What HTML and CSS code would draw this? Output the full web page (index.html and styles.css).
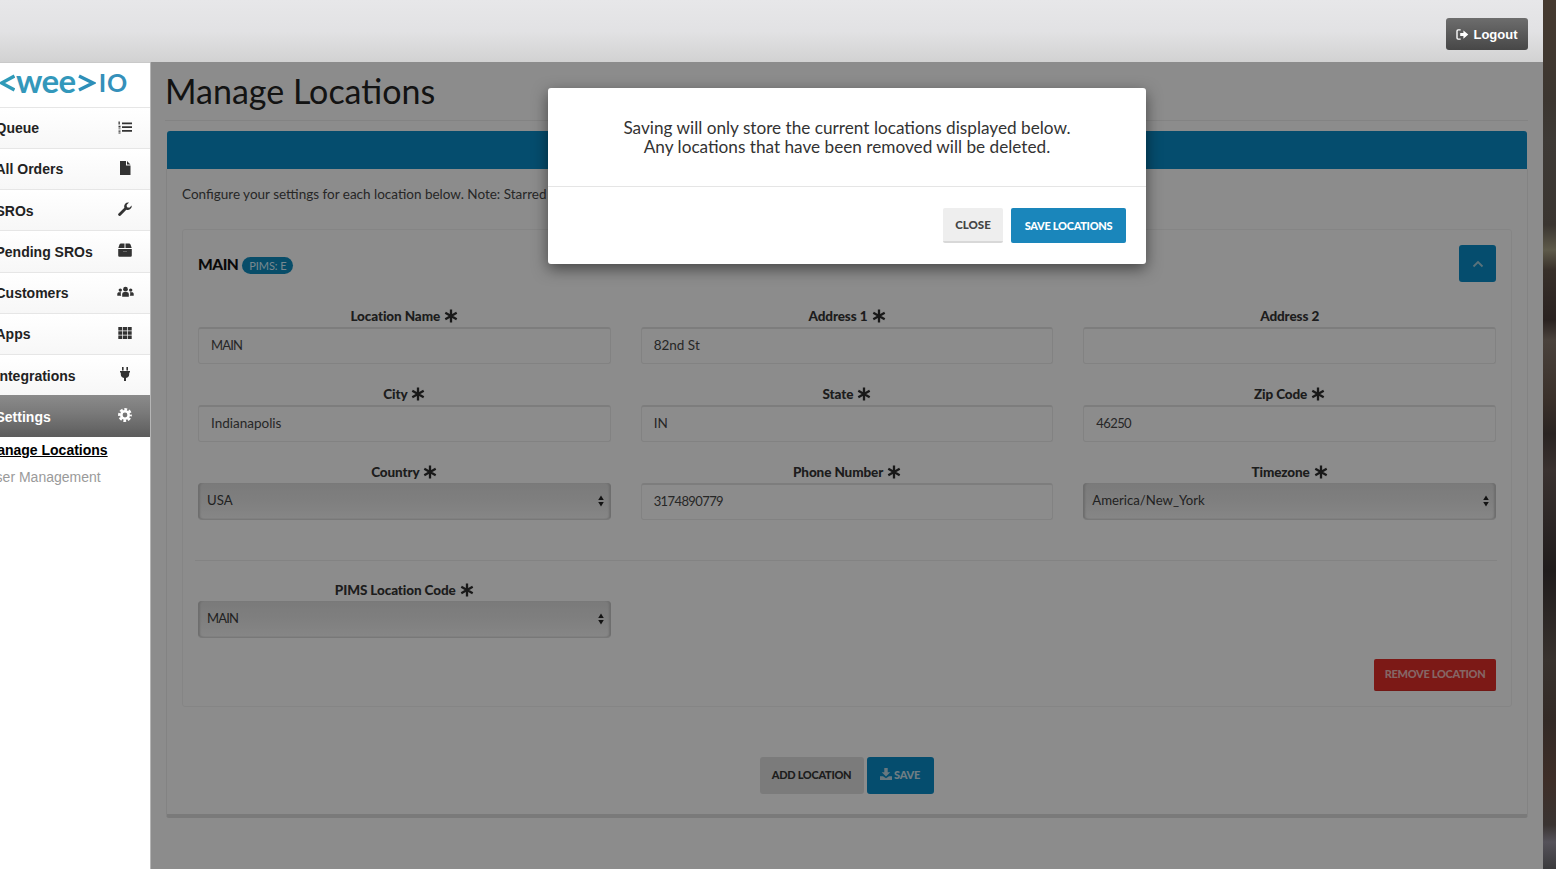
FILE: index.html
```html
<!DOCTYPE html>
<html lang="en">
<head>
<meta charset="utf-8">
<title>Manage Locations</title>
<link rel="stylesheet" href="styles.css">
</head>
<body>
<div class="app">
  <header class="topbar">
    <button class="logout">
      <svg class="ic-logout" viewBox="0 0 14 12"><path d="M5 1H2.200C1.500 1 1 1.500 1 2.200v7.600C1 10.500 1.500 11 2.200 11H5" fill="none" stroke="#fff" stroke-width="1.500"/><path d="M4.500 4.300H8V1.500L13.300 6 8 10.500V7.700H4.500z" fill="#fff"/></svg>
      Logout
    </button>
  </header>
  <div class="shell">
    <aside class="sidebar">
      <div class="logo">
        <svg class="chev chev-l" viewBox="0 0 16 18"><polyline points="15.500,2 2.500,9 15.500,16" fill="none" stroke="#2f9ab8" stroke-width="3.400"/></svg>
        <span class="logo-wee">wee</span>
        <svg class="chev chev-r" viewBox="0 0 18 18"><polyline points="1,2 15,9 1,16" fill="none" stroke="#2d8fb9" stroke-width="3.400"/></svg>
        <span class="logo-io">IO</span>
      </div>
      <nav>
        <a class="nav-item"><span>Queue</span>
          <svg class="nav-ic" viewBox="0 0 14 14"><path d="M4 2.500h10v1.700H4zM4 6.200h10v1.700H4zM4 10h10v1.700H4z" fill="#333"/><path d="M.5 1.500h1.300v3H.5zM.5 5.800h2v1.100H.5zM.5 7.600h2v1H.5zM.5 9.700h2v.9H.5zM.5 11.200h2v.8H.5zM.5 12.600h2v.9H.5z" fill="#333"/></svg></a>
        <a class="nav-item"><span>All Orders</span>
          <svg class="nav-ic" viewBox="0 0 14 14"><path d="M2 0h6v4.500h4.500v9.500H2zM9 0l3.500 3.500H9z" fill="#333"/></svg></a>
        <a class="nav-item"><span>SROs</span>
          <svg class="nav-ic" viewBox="0 0 14 14"><path d="M.6 11.400 6.400 5.800A4 4 0 0 1 11 .6L8.600 3l.4 2.300 2.300.5L13.700 3.400A4 4 0 0 1 8.300 7.700L2.700 13.500A1.400 1.400 0 0 1 .6 11.400z" fill="#333"/></svg></a>
        <a class="nav-item"><span>Pending SROs</span>
          <svg class="nav-ic" viewBox="0 0 14 14"><path d="M3 .5h3.500v4.500H.3L1.500 1.500A1.600 1.600 0 0 1 3 .5zM7.500 .5H11a1.600 1.600 0 0 1 1.500 1l1.200 3.500H7.500zM.2 6h13.600v6.500a1.200 1.200 0 0 1-1.200 1.200H1.400A1.200 1.200 0 0 1 .2 12.500z" fill="#333"/><path d="M5 8.500h4" stroke="#666" stroke-width="1"/></svg></a>
        <a class="nav-item"><span>Customers</span>
          <svg class="nav-ic ic-wide" viewBox="0 0 18 14"><g fill="#333"><circle cx="9" cy="4" r="2.500"/><path d="M5.500 12V9.300C5.500 7.900 6.500 7 7.800 7h2.400c1.300 0 2.300.9 2.300 2.300V12z"/><circle cx="3.500" cy="5" r="1.800"/><path d="M.3 11V9.200C.3 8 1.200 7.300 2.200 7.300h2.200A3.500 3.500 0 0 0 4.500 11z"/><circle cx="14.500" cy="5" r="1.800"/><path d="M17.700 11V9.200c0-1.200-.9-1.900-1.900-1.900h-2.200a3.500 3.500 0 0 1-.1 3.700z"/></g></svg></a>
        <a class="nav-item"><span>Apps</span>
          <svg class="nav-ic" viewBox="0 0 14 14"><path d="M.3 1h4v3.400h-4zM5 1h4v3.400H5zM9.700 1h4v3.400h-4zM.3 5.300h4v3.400h-4zM5 5.300h4v3.400H5zM9.700 5.300h4v3.400h-4zM.3 9.600h4V13h-4zM5 9.600h4V13H5zM9.700 9.600h4V13h-4z" fill="#333"/></svg></a>
        <a class="nav-item"><span>Integrations</span>
          <svg class="nav-ic" viewBox="0 0 14 14"><path d="M4 0h1.600v3.500H4zM8.400 0H10v3.500H8.400zM2 4h10v1.500h-.8v1.700A4 4 0 0 1 8 11v3H6v-3a4 4 0 0 1-3.200-3.800V5.500H2z" fill="#333"/></svg></a>
        <a class="nav-item nav-active"><span>Settings</span>
          <svg class="nav-ic" viewBox="0 0 14 14"><circle cx="7" cy="7" r="3.700" fill="none" stroke="#fff" stroke-width="2.600"/><circle cx="7" cy="7" r="5.700" fill="none" stroke="#fff" stroke-width="2.400" stroke-dasharray="2.800 1.680" stroke-dashoffset="1.400"/></svg></a>
      </nav>
      <ul class="subnav">
        <li class="sub-active">Manage Locations</li>
        <li>User Management</li>
      </ul>
    </aside>
    <main class="main">
      <h1 class="page-title">Manage Locations</h1>
      <section class="card">
        <div class="card-bar"></div>
        <div class="card-body">
          <p class="intro">Configure your settings for each location below. Note: Starred (*) fields are required.</p>
          <div class="location">
            <div class="loc-head">
              <div class="loc-name"><strong>MAIN</strong><span class="badge">PIMS: E</span></div>
              <button class="collapse"><svg viewBox="0 0 12 8"><polyline points="1.500,6.500 6,2 10.500,6.500" fill="none" stroke="#9cc4d4" stroke-width="1.800"/></svg></button>
            </div>
            <div class="form-grid">
              <div class="field"><label>Location Name <svg class="star" viewBox="0 0 14 14"><use href="#asterisk"/></svg></label><input class="caps" type="text" value="MAIN"></div>
              <div class="field"><label>Address 1 <svg class="star" viewBox="0 0 14 14"><use href="#asterisk"/></svg></label><input type="text" value="82nd St"></div>
              <div class="field"><label>Address 2</label><input type="text" value=""></div>
              <div class="field"><label>City <svg class="star" viewBox="0 0 14 14"><use href="#asterisk"/></svg></label><input type="text" value="Indianapolis"></div>
              <div class="field"><label>State <svg class="star" viewBox="0 0 14 14"><use href="#asterisk"/></svg></label><input type="text" value="IN"></div>
              <div class="field"><label>Zip Code <svg class="star" viewBox="0 0 14 14"><use href="#asterisk"/></svg></label><input class="num" type="text" value="46250"></div>
              <div class="field"><label>Country <svg class="star" viewBox="0 0 14 14"><use href="#asterisk"/></svg></label>
                <div class="select"><span>USA</span><svg class="updown" viewBox="0 0 6 12"><path d="M3 .5 5.800 5H.2zM3 11.500.2 7h5.600z" fill="#222"/></svg></div></div>
              <div class="field"><label>Phone Number <svg class="star" viewBox="0 0 14 14"><use href="#asterisk"/></svg></label><input class="num" type="text" value="3174890779"></div>
              <div class="field"><label>Timezone <svg class="star" viewBox="0 0 14 14"><use href="#asterisk"/></svg></label>
                <div class="select"><span>America/New_York</span><svg class="updown" viewBox="0 0 6 12"><path d="M3 .5 5.800 5H.2zM3 11.500.2 7h5.600z" fill="#222"/></svg></div></div>
            </div>
            <hr class="rule">
            <div class="form-grid">
              <div class="field"><label>PIMS Location Code <svg class="star" viewBox="0 0 14 14"><use href="#asterisk"/></svg></label>
                <div class="select"><span class="caps">MAIN</span><svg class="updown" viewBox="0 0 6 12"><path d="M3 .5 5.800 5H.2zM3 11.500.2 7h5.600z" fill="#222"/></svg></div></div>
            </div>
            <div class="loc-actions"><button class="btn btn-danger">REMOVE LOCATION</button></div>
          </div>
          <div class="card-actions">
            <button class="btn btn-grey">ADD LOCATION</button>
            <button class="btn btn-blue"><svg class="ic-dl" viewBox="0 0 14 14"><path d="M5 0h4v5h3L7 10 2 5h3z" fill="#b5cfdb"/><path d="M0 9.500h3.500L7 12l3.500-2.500H14V14H0z" fill="#b5cfdb"/></svg>SAVE</button>
          </div>
        </div>
      </section>
      <div class="backdrop">
        <div class="modal">
          <div class="modal-body">Saving will only store the current locations displayed below.<br>Any locations that have been removed will be deleted.</div>
          <div class="modal-foot">
            <button class="mbtn mbtn-close">CLOSE</button>
            <button class="mbtn mbtn-save">SAVE LOCATIONS</button>
          </div>
        </div>
      </div>
    </main>
  </div>
</div>
<svg class="defs" width="0" height="0"><defs><g id="asterisk"><path d="M7 .5v13M1.300 3.700l11.400 6.600M12.700 3.700 1.300 10.300" fill="none" stroke="#2b2b2b" stroke-width="2.300"/></g></defs></svg>
</body>
</html>
```

FILE: styles.css
```css
* { box-sizing: border-box; }
html, body { margin: 0; height: 100%; overflow: hidden; }
body {
  width: 1556px;
  height: 869px;
  font-family: "Lato", "Liberation Sans", sans-serif;
  color: #333;
  background: linear-gradient(180deg, #463a30 0, #3c3630 100px, #3e3a36 140px, #3a3530 225px, #5e5a4a 250px, #38302a 270px, #2a2220 320px, #4a423c 340px, #3a302a 400px, #2a2422 434px, #3a3230 470px, #201c1c 570px, #38322e 660px, #332a26 720px, #3e2e28 780px, #3a3432 825px, #55525a 842px, #3a3a3c 869px);
}
button { font-family: inherit; cursor: pointer; }
.defs { position: absolute; }

.app { width: 1543px; height: 869px; display: flex; flex-direction: column; background: #fff; }

.topbar {
  height: 62px;
  flex: none;
  display: flex;
  justify-content: flex-end;
  align-items: flex-start;
  padding: 18px 15px 0 0;
  background: linear-gradient(180deg, #e7e7e9 0, #e2e2e4 50%, #d2d2d2 100%);
}
.logout {
  width: 82px;
  height: 32px;
  display: flex;
  align-items: center;
  justify-content: center;
  gap: 4px;
  padding: 0;
  border: 0;
  border-radius: 3px;
  color: #fff;
  font: bold 13px "Liberation Sans", sans-serif;
  background: linear-gradient(180deg, #6d6d6d 0, #474747 100%);
}
.ic-logout { width: 13px; height: 11px; }

.shell { flex: 1; display: flex; min-height: 0; }

.sidebar {
  width: 150px;
  flex: none;
  background: #fff;
  overflow: hidden;
  font-family: "Liberation Sans", sans-serif;
  font-size: 14px;
}
.logo {
  height: 44.500px;
  display: flex;
  align-items: center;
  padding-bottom: 2px;
  border-top: 1px solid #c9c9c9;
  white-space: nowrap;
}
.logo-wee { font: 700 33px/1 "Lato", sans-serif; margin: -7px 0 0 1px; letter-spacing: -.6px; color: #3398bb; }
.logo-io { font: 700 25px/1 "Lato", sans-serif; margin: -2px 0 0 3px; color: #3590ba; letter-spacing: 1px; }
.chev { height: 18px; flex: none; margin-top: -2px; }
.chev-l { width: 16px; margin-left: -1px; }
.chev-r { width: 18px; margin-left: 2px; }

.nav-item {
  height: 41.250px;
  display: flex;
  align-items: center;
  justify-content: space-between;
  padding-right: 18px;
  border-top: 1px solid #e6e6e6;
  background: linear-gradient(180deg, #fff 0, #f7f7f7 100%);
  color: #222;
  font-weight: bold;
}
.nav-item span { margin: 1px 0 0 -4.500px; }
.nav-ic { width: 14px; height: 14px; margin-top: -2px; }
.ic-wide { width: 17px; margin-right: -2px; }
.nav-active {
  border-top: 1px solid #8a8a8a;
  color: #fff;
  background: linear-gradient(180deg, #8a8a8a 0, #7a7a7a 40%, #5c5c5c 100%);
}

.subnav { list-style: none; margin: 0; padding: 0; }
.subnav li { height: 27px; line-height: 27px; margin-left: -14.500px; color: #9a9a9a; white-space: nowrap; }
.subnav .sub-active { color: #000; font-weight: bold; text-decoration: underline; }

.main {
  position: relative;
  flex: 1;
  min-width: 0;
  padding: 0 15px;
  background: #f1f1f1;
  border-left: 1px solid #b5b5b5;
}
.page-title {
  margin: 0 0 0 -1px;
  height: 59px;
  padding-top: 8px;
  font: 400 34px/42px "Lato", sans-serif;
  color: #222;
  border-bottom: 1px solid #e2e2e2;
}
.card { margin-top: 10px; }
.card-bar { height: 38px; margin: 0 1px; border-radius: 3px 3px 0 0; background: #0986bd; }
.card-body {
  height: 649px;
  padding: 0 15px;
  background: #f1f1f1;
  border: 1px solid #e2e2e2;
  border-top: 0;
  border-bottom: 4px solid #d2d2d2;
  border-radius: 0 0 3px 3px;
}
.intro { margin: 0; padding-top: 16px; height: 60px; font-size: 13.500px; line-height: 18px; color: #444; }

.location {
  height: 478px;
  padding: 15px 15px 0;
  border: 1px solid #e6e6e6;
  border-radius: 3px;
}
.loc-head { display: flex; justify-content: space-between; align-items: flex-start; height: 62px; }
.loc-name { display: flex; align-items: center; gap: 4px; height: 38px; }
.loc-name strong { font-size: 15.500px; font-weight: 900; letter-spacing: -.5px; color: #111; }
.badge {
  height: 17px;
  padding: 0 7px;
  margin-top: 2px;
  border-radius: 9px;
  background: #0f85b5;
  color: #cfeaf6;
  font-size: 11px;
  letter-spacing: -.1px;
  line-height: 17px;
}
.collapse {
  width: 37px;
  height: 37px;
  display: flex;
  align-items: center;
  justify-content: center;
  padding: 0;
  border: 0;
  border-radius: 3px;
  background: #0986bd;
}
.collapse svg { width: 12px; height: 8px; }

.form-grid { display: grid; grid-template-columns: repeat(3, 1fr); column-gap: 30px; }
.field { height: 78px; display: flex; flex-direction: column; }
.field label {
  height: 20px;
  display: flex;
  align-items: center;
  justify-content: center;
  gap: 1px;
  padding-bottom: 2px;
  font-size: 13.500px;
  font-weight: 900;
  letter-spacing: -.1px;
  color: #333;
  white-space: pre;
}
.star { width: 14px; height: 14px; }
.field input, .select {
  height: 37px;
  width: 100%;
  margin: 0;
  color: #444;
  font-family: "Lato", sans-serif;
  font-size: 13.500px;
}
.field input {
  padding: 0 12px 3px;
  background: #f1f1f1;
  border: 1px solid #e0e0e0;
  border-top: 2px solid #d8d8d8;
  border-radius: 3px;
  outline: 0;
}
.field input.num { font-size: 13px; letter-spacing: -.6px; }
.field input.caps, .select .caps { font-size: 13px; letter-spacing: -.8px; }
.select {
  display: flex;
  align-items: center;
  justify-content: space-between;
  padding: 0 7px 3px 9px;
  border-radius: 4px;
  background: linear-gradient(180deg, #d3d3d3 0, #dcdcdc 55%, #e8e8e8 100%);
  box-shadow: inset 3px 0 2px -1px #bcbcbc, inset -3px 0 2px -1px #bcbcbc, inset 0 -1px 0 #e0e0e0;
  border-bottom: 1px solid #cfcfcf;
  font-size: 13.200px;
  color: #3a3a3a;
}
.updown { width: 6px; height: 12px; margin-top: 3px; }

.rule { height: 0; margin: 19px -1px 20px -3px; border: 0; border-top: 1px solid #e2e2e2; }
.loc-actions { display: flex; justify-content: flex-end; }
.btn {
  height: 32px;
  border: 0;
  border-radius: 2px;
  padding: 0 0 2px;
  font-family: "Lato", sans-serif;
  font-size: 11px;
  font-weight: 900;
  letter-spacing: -.3px;
}
.btn-danger { width: 122px; background: #d62b27; color: #e6b0ae; border-bottom: 1px solid #c52a25; }
.card-actions { display: flex; justify-content: center; gap: 3px; margin-top: 50px; padding-right: 1px; }
.btn-grey { width: 104px; height: 37px; background: #d4d4d4; color: #333; border-radius: 3px; }
.btn-blue {
  width: 67px;
  height: 37px;
  display: flex;
  align-items: center;
  justify-content: center;
  gap: 2px;
  border-radius: 3px;
  background: #0986bd;
  color: #c0d8e3;
}
.ic-dl { width: 12px; height: 12px; margin-top: -1px; }

.backdrop { position: absolute; inset: 0; background: rgba(0, 0, 0, .42); padding-top: 26px; }
.modal {
  width: 598px;
  height: 176px;
  margin: 0 auto;
  background: #fff;
  border-radius: 3px;
  box-shadow: 0 5px 15px rgba(0, 0, 0, .5);
}
.modal-body {
  height: 99px;
  padding-top: 30px;
  text-align: center;
  font-size: 17.200px;
  line-height: 19px;
  color: #333;
  border-bottom: 1px solid #e5e5e5;
}
.modal-foot { display: flex; justify-content: flex-end; gap: 8px; padding: 21px 20px 0; }
.mbtn {
  height: 35px;
  border: 0;
  border-radius: 2px;
  padding: 0;
  font-size: 11.500px;
  font-weight: 900;
}
.mbtn-close { width: 60px; background: #eee; color: #444; border-bottom: 2px solid #d8d8d8; }
.mbtn-save { width: 115px; background: #1a86bb; color: #fff; font-size: 11px; letter-spacing: -.3px; }
```
